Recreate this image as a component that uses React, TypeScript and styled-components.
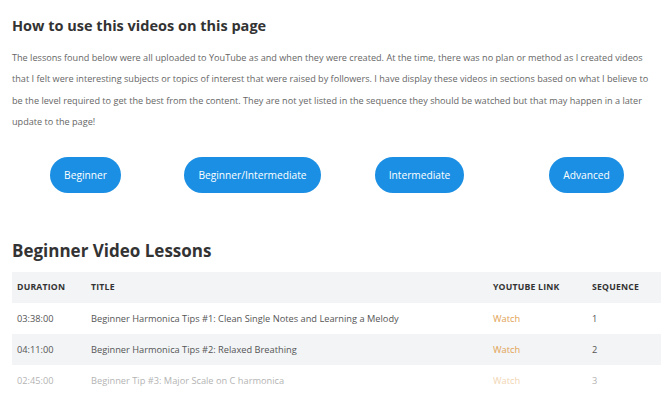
import React from "react";
import styled, { createGlobalStyle } from "styled-components";

const Global = createGlobalStyle`
  html, body { margin: 0; padding: 0; background: #fff; }
  body { font-family: "Open Sans", "Noto Sans", sans-serif; }
  * { box-sizing: border-box; }
`;

const Page = styled.div`
  width: 670px;
  height: 403px;
  overflow: hidden;
  padding: 15px 9px 0 12px;
`;

const Title = styled.h2`
  margin: 0;
  font-size: 14.5px;
  line-height: 22px;
  font-weight: 700;
  color: #333;
`;

const Para = styled.p`
  margin: 10px 0 0;
  font-size: 9.15px;
  line-height: 21.4px;
  color: #666;
`;

const ButtonRow = styled.div`
  display: grid;
  grid-template-columns: repeat(4, 167px);
  justify-items: center;
  margin: 24px 0 0 -10px;
`;

const Pill = styled.a`
  display: inline-flex;
  align-items: center;
  height: 36px;
  padding: 0 14px;
  border-radius: 18px;
  background: #1a8fe3;
  color: #fff;
  font-size: 10.2px;
  text-decoration: none;
`;

const SubTitle = styled.h2`
  margin: 46px 0 0;
  font-size: 17px;
  line-height: 24px;
  font-weight: 700;
  color: #333;
`;

const Table = styled.table`
  margin-top: 9px;
  width: 649px;
  border-collapse: collapse;
  font-size: 9.25px;
  color: #555;
`;

const Row = styled.tr<{ $shade?: boolean; $faded?: boolean }>`
  height: 31px;
  background: ${(p) => (p.$shade ? "#f2f4f6" : "#fff")};
  opacity: ${(p) => (p.$faded ? 0.45 : 1)};
`;

const Th = styled.th<{ $w?: number }>`
  text-align: left;
  font-weight: 700;
  color: #333;
  font-size: 8.7px;
  letter-spacing: 0.2px;
  padding: 0 0 0 5px;
  ${(p) => (p.$w ? `width: ${p.$w}px;` : "")}
`;

const Td = styled.td`
  padding: 0 0 0 5px;
`;

const Watch = styled.a`
  color: #e2a355;
  text-decoration: none;
`;

const rows = [
  { d: "03:38:00", t: "Beginner Harmonica Tips #1: Clean Single Notes and Learning a Melody", s: "1" },
  { d: "04:11:00", t: "Beginner Harmonica Tips #2: Relaxed Breathing", s: "2" },
  { d: "02:45:00", t: "Beginner Tip #3: Major Scale on C harmonica", s: "3" },
];

export default function App() {
  return (
    <Page>
      <Global />
      <Title>How to use this videos on this page</Title>
      <Para>
        The lessons found below were all uploaded to YouTube as and when they were created. At the time, there was no plan or method as I created videos that I felt were interesting subjects or topics of interest that were raised by followers. I have display these videos in sections based on what I believe to be the level required to get the best from the content. They are not yet listed in the sequence they should be watched but that may happen in a later update to the page!
      </Para>
      <ButtonRow>
        <Pill>Beginner</Pill>
        <Pill>Beginner/Intermediate</Pill>
        <Pill>Intermediate</Pill>
        <Pill>Advanced</Pill>
      </ButtonRow>
      <SubTitle>Beginner Video Lessons</SubTitle>
      <Table>
        <thead>
          <Row $shade>
            <Th $w={74}>DURATION</Th>
            <Th>TITLE</Th>
            <Th $w={99}>YOUTUBE LINK</Th>
            <Th $w={74}>SEQUENCE</Th>
          </Row>
        </thead>
        <tbody>
          {rows.map((r, i) => (
            <Row key={r.s} $shade={i % 2 === 1} $faded={i === 2}>
              <Td>{r.d}</Td>
              <Td>{r.t}</Td>
              <Td><Watch>Watch</Watch></Td>
              <Td>{r.s}</Td>
            </Row>
          ))}
        </tbody>
      </Table>
    </Page>
  );
}
